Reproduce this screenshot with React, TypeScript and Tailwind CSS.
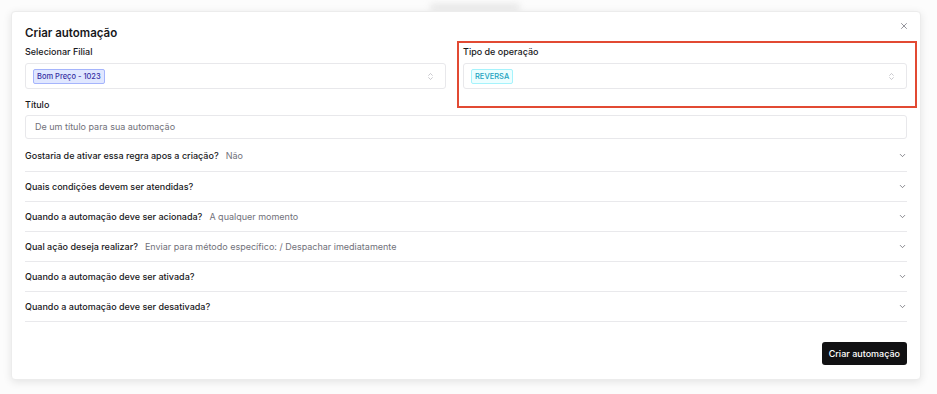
import { ChevronDown, ChevronsUpDown, X } from 'lucide-react';

const rows = [
  { q: 'Gostaria de ativar essa regra apos a criação?', a: 'Não' },
  { q: 'Quais condições devem ser atendidas?', a: '' },
  { q: 'Quando a automação deve ser acionada?', a: 'A qualquer momento' },
  { q: 'Qual ação deseja realizar?', a: 'Enviar para método específico: / Despachar imediatamente' },
  { q: 'Quando a automação deve ser ativada?', a: '' },
  { q: 'Quando a automação deve ser desativada?', a: '' },
];

const App = () => {
  return (
    <div className="relative h-[394px] w-[937px] bg-[#fcfcfc] pl-[11px] pt-[11px] font-['Inter',sans-serif] text-[#18181b]">
      {/* faint thing behind the dialog */}
      <div className="absolute left-[430px] top-[4px] h-[6px] w-[90px] rounded-full bg-[#e5e5e5] blur-[3px]" />

      <div className="relative flex h-[369px] w-[910px] flex-col rounded-[4px] border border-[#ececec] bg-white px-[13px] pt-[14px] shadow-[0_2px_8px_rgba(0,0,0,0.10)]">
        <button className="absolute right-[11px] top-[9px] text-[#71717a]">
          <X size={10} strokeWidth={1.8} />
        </button>

        <h2 className="text-[11.5px] font-semibold leading-[14px]">Criar automação</h2>

        <div className="mt-[5px] flex gap-[17px]">
          <div className="flex w-[421px] flex-col">
            <label className="text-[9px] font-medium leading-[13px]">Selecionar Filial</label>
            <div className="mt-[5px] flex h-[26px] items-center justify-between rounded-[3px] border border-[#e8e8eb] px-[7px]">
              <span className="rounded-[2px] border border-[#a5b4fc] bg-[#e0e7ff] px-[3px] text-[7.5px] font-medium leading-[13px] text-[#3730a3]">
                Bom Preço - 1023
              </span>
              <ChevronsUpDown size={9} strokeWidth={1.5} className="mr-[3px] text-[#a1a1aa]" />
            </div>
          </div>

          <div className="relative flex flex-1 flex-col">
            <div className="pointer-events-none absolute -left-[6px] -right-[10px] -top-[4px] -bottom-[19px] border-2 border-[#e24a33]" />
            <label className="text-[9px] font-medium leading-[13px]">Tipo de operação</label>
            <div className="mt-[5px] flex h-[26px] items-center justify-between rounded-[3px] border border-[#e8e8eb] px-[7px]">
              <span className="rounded-[2px] border border-[#a5f3fc] bg-[#ecfeff] px-[3px] text-[7.5px] font-medium leading-[13px] text-[#22a2c0]">
                REVERSA
              </span>
              <ChevronsUpDown size={9} strokeWidth={1.5} className="mr-[3px] text-[#a1a1aa]" />
            </div>
          </div>
        </div>

        <label className="mt-[9px] text-[9px] font-medium leading-[13px]">Título</label>
        <div className="mt-[4px] flex h-[24px] items-center rounded-[3px] border border-[#e8e8eb] px-[9px] text-[9px] text-[#71717a]">
          De um título para sua automação
        </div>

        <div className="flex flex-col">
          {rows.map((r) => (
            <div
              key={r.q}
              className="flex h-[30px] items-center justify-between border-b border-[#e9e9ec] first:h-[33px]"
            >
              <div className="flex items-center gap-[7px] text-[9px] leading-[13px]">
                <span className="font-medium text-[#18181b]">{r.q}</span>
                {r.a && <span className="text-[#71717a]">{r.a}</span>}
              </div>
              <ChevronDown size={9} strokeWidth={1.8} className="text-[#52525b]" />
            </div>
          ))}
        </div>

        <div className="mt-[20px] flex justify-end">
          <button className="h-[23px] rounded-[3px] bg-[#111113] px-[7px] text-[9px] font-medium text-white">
            Criar automação
          </button>
        </div>
      </div>
    </div>
  );
};

export default App;
